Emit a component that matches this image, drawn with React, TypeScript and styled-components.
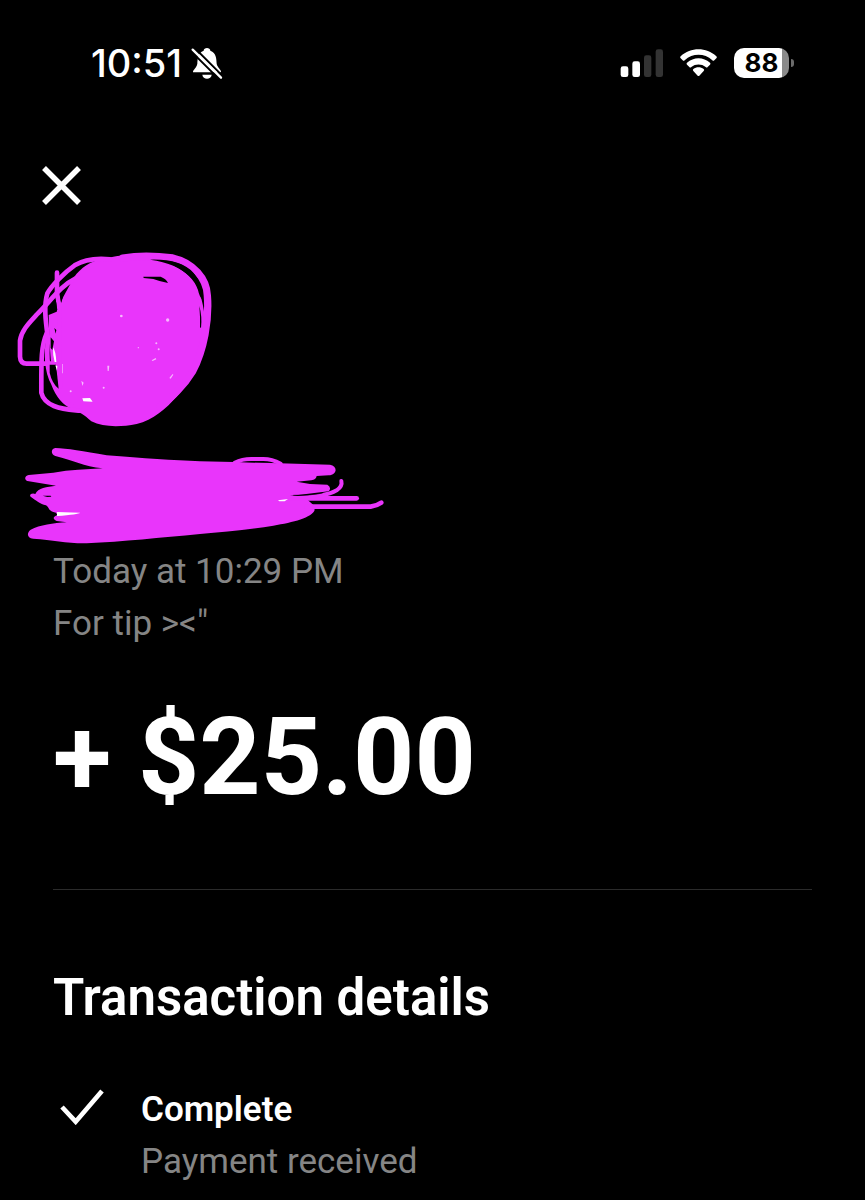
import React from "react";
import styled, { createGlobalStyle } from "styled-components";

const INK = "#e935fb";

const GlobalStyle = createGlobalStyle`
  *, *::before, *::after {
    box-sizing: border-box;
  }

  body {
    margin: 0;
    background: #000;
    color: #fff;
    font-family: Roboto, "Liberation Sans", sans-serif;
  }

  svg {
    display: block;
    flex-shrink: 0;
  }
`;

const Screen = styled.div`
  min-height: 100vh;
  background: #000;
`;

const StatusBar = styled.header`
  display: flex;
  align-items: center;
  justify-content: space-between;
  height: 126px;
  padding: 0 71px 0 91px;
  font-family: Inter, sans-serif;
`;

const StatusGroup = styled.div<{ $gap: number }>`
  display: flex;
  align-items: center;
  gap: ${({ $gap }) => $gap}px;
`;

const Clock = styled.time`
  font-size: 38px;
  line-height: 48px;
  font-weight: 500;
`;

const Battery = styled.div`
  display: flex;
  align-items: center;
  gap: 2px;
`;

const BatteryBody = styled.div<{ $level: number }>`
  display: flex;
  align-items: center;
  justify-content: center;
  width: 55px;
  height: 30px;
  border-radius: 10px;
  background: linear-gradient(
    to right,
    #fff ${({ $level }) => $level}%,
    #8a8a8a ${({ $level }) => $level}%
  );
  color: #000;
  font-size: 26px;
  line-height: 30px;
  font-weight: 700;
`;

const BatteryTip = styled.span`
  width: 3px;
  height: 8px;
  border-radius: 0 4px 4px 0;
  background: #6b6b6b;
`;

const TopNav = styled.nav`
  padding: 39px 41px 34px;
`;

const CloseButton = styled.button`
  display: block;
  padding: 0;
  border: 0;
  background: none;
  color: #fff;
  cursor: pointer;
`;

const Payer = styled.div`
  padding-left: 10px;
`;

const Content = styled.main`
  padding: 1px 53px 12px;
`;

const Muted = styled.p`
  margin: 0;
  color: #858585;
  font-size: 35px;
  line-height: 52px;
`;

const Amount = styled.h1`
  margin: 48px 0 71px;
  font-size: 107px;
  line-height: 120px;
  font-weight: 700;
`;

const Divider = styled.hr`
  height: 1px;
  margin: 0;
  border: 0;
  background: #2b2b2b;
`;

const SectionTitle = styled.h2`
  margin: 76px 0 54px;
  font-size: 51px;
  line-height: 64px;
  font-weight: 600;
`;

const Step = styled.div`
  display: flex;
  align-items: flex-start;
  gap: 36px;
`;

const StepIcon = styled.div`
  display: flex;
  align-items: center;
  justify-content: flex-end;
  width: 52px;
  height: 46px;
`;

const StepTitle = styled.h3`
  margin: 0;
  font-size: 35px;
  line-height: 52px;
  font-weight: 600;
`;

function SilentIcon() {
  return (
    <svg width="32" height="34" viewBox="0 0 96 102" role="img" aria-label="Silent mode">
      <path
        d="M6 79C5 71 17 66 19 53C20 38 20 20 38 14C38 3 58 3 58 14C76 20 76 39 77 53C79 65 91 70 90 79Z"
        fill="#fff"
      />
      <path d="M34 86H62C61 102 35 102 34 86Z" fill="#fff" />
      <path d="M8 3L98 93M-1 14L86 101" stroke="#000" strokeWidth="6" />
      <path d="M5 11L90 95" stroke="#fff" strokeWidth="7" strokeLinecap="round" />
    </svg>
  );
}

function SignalIcon() {
  return (
    <svg width="43" height="28" viewBox="0 0 129 84" role="img" aria-label="Signal">
      <rect x="2" y="52" width="23" height="32" rx="7" fill="#fff" />
      <rect x="37" y="37" width="23" height="47" rx="7" fill="#fff" />
      <rect x="72" y="19" width="22" height="65" rx="7" fill="#333" />
      <rect x="107" y="1" width="22" height="83" rx="7" fill="#333" />
    </svg>
  );
}

function WifiIcon() {
  return (
    <svg width="37" height="28" viewBox="0 0 111 84" role="img" aria-label="Wi-Fi">
      <path
        d="M2 22C32 -6 79 -6 109 22Q112 25 109 28L103 34Q100 37 97 34C73 12 38 12 14 34Q11 37 8 34L2 28Q-1 25 2 22Z"
        fill="#fff"
      />
      <path
        d="M21 41C41 23 70 23 90 41Q93 44 90 47L83 54Q80 57 77 54C65 44 46 44 34 54Q31 57 28 54L21 47Q18 44 21 41Z"
        fill="#fff"
      />
      <path d="M40 60C49 53 62 53 71 60Q74 63 71 66L58 80Q56 82 53 80L40 66Q37 63 40 60Z" fill="#fff" />
    </svg>
  );
}

function CloseIcon() {
  return (
    <svg width="41" height="41" viewBox="0 0 41 41" aria-hidden="true">
      <path d="M3 3L38 38M38 3L3 38" stroke="currentColor" strokeWidth="5.5" />
    </svg>
  );
}

function CheckIcon() {
  return (
    <svg width="45" height="36" viewBox="0 0 135 108" aria-hidden="true">
      <path d="M6 54L47 98L126 6" fill="none" stroke="#fff" strokeWidth="14" />
    </svg>
  );
}

// Marker scribble that hides the payer's avatar
function AvatarScribble() {
  return (
    <svg width="220" height="200" viewBox="0 0 660 600" role="img" aria-label="Hidden avatar">
      <path
        d="M192 112C212 84 242 62 280 58C320 46 340 44 400 50C462 56 520 86 548 118C566 140 578 180 584 230L588 310C576 370 540 424 500 470C468 505 430 540 380 552C330 562 280 562 244 544C222 524 205 514 186 508C160 490 140 460 126 410L118 300L116 225L140 215L160 170Z"
        fill={INK}
      />
      <g fill="none" stroke={INK} strokeLinecap="round" strokeLinejoin="round">
        <path
          d="M338 54C390 46 440 48 488 54C550 68 590 116 592 166C598 240 582 330 548 394C520 440 486 470 450 500"
          strokeWidth="22"
        />
        <path
          d="M300 58C260 54 220 60 194 76C162 98 124 138 112 160C100 200 108 250 114 296C110 340 108 390 130 430C142 462 160 488 188 500"
          strokeWidth="14"
        />
        <path
          d="M196 116C150 138 120 186 80 224C56 250 34 272 30 302V350Q31 371 50 371H138"
          strokeWidth="14"
        />
        <path d="M110 280C92 320 94 370 94 458Q100 484 132 498C160 510 190 510 210 512" strokeWidth="14" />
        <path d="M141 98V160C150 200 152 240 146 300L150 440" strokeWidth="14" />
      </g>
      <g fill="#000">
        <path d="M168 150C160 162 157 174 154 190L151 172Z" />
        <path d="M118 198L137 178L142 210L115 220Z" />
        <path d="M119 398L119 374H138L146 446Q126 430 119 398Z" />
        <path d="M103 396Q112 458 155 492Q122 486 105 460Z" />
        <path d="M400 110H452Q468 116 474 129Q448 124 430 117L401 114Z" />
        <path d="M420 59Q510 56 550 98Q578 130 578 180Q568 170 564 150Q548 104 492 78Q460 64 420 59Z" />
        <path d="M568 198Q577 230 573 264L570 262Q571 230 568 198Z" />
        <path d="M122 292L132 304L127 330L122 324ZM133 264L139 270L137 281Z" />
      </g>
      <g fill="#fff">
        <path d="M129 322Q137 332 139 366H134Q128 346 129 322ZM136 376L142 378L141 392Z" />
        <path d="M217 475L240 474L248 485L220 484Z" />
      </g>
      <g fill="#fff" opacity="0.65">
        <circle cx="334" cy="228" r="4" />
        <circle cx="473" cy="240" r="5" />
        <path d="M425 361L437 354L439 358L428 363ZM478 414L488 402L490 404L482 416Z" />
        <path d="M292 377H298L296 393H293ZM214 422L221 428L217 438ZM157 372L159 372V400H157Z" />
        <circle cx="281" cy="443" r="3" />
        <circle cx="446" cy="328" r="3" />
        <circle cx="439" cy="310" r="3" />
        <circle cx="385" cy="323" r="2" />
        <circle cx="182" cy="454" r="3" />
      </g>
    </svg>
  );
}

// Marker scribble that hides the payer's name
function NameScribble() {
  return (
    <svg width="390" height="105" viewBox="0 15 1170 315" role="img" aria-label="Hidden name">
      <path
        d="M136 39C170 40 220 48 290 61C400 70 490 76 570 79L670 81L960 89C984 94 982 119 956 121L920 123Q918 134 904 136L860 140L900 147L952 149Q966 158 956 169L840 183H880L910 210L914 225C906 248 850 262 790 272C720 284 640 292 570 297C450 308 340 320 230 325C170 326 130 314 70 311C50 310 50 292 62 284C90 270 130 264 170 262L140 258C126 252 130 244 142 240L138 233C112 228 118 216 108 211C90 208 78 196 64 187C54 180 66 172 76 177C84 158 110 156 138 152L52 138C42 134 44 122 56 120L130 113C180 104 230 103 278 100C220 94 190 76 136 63C122 58 122 41 136 39Z"
        fill={INK}
      />
      <g fill="none" stroke={INK} strokeLinecap="round" strokeLinejoin="round">
        <path d="M674 83Q696 72 724 72H760Q786 72 812 86" strokeWidth="12" />
        <path d="M994 138Q998 154 980 166C956 180 900 188 850 190" strokeWidth="12" />
        <path d="M840 190H1040" strokeWidth="14" />
        <path d="M890 215H1082Q1100 213 1114 203" strokeWidth="14" />
      </g>
      <path d="M98 182H122L124 185L112 186Z" fill="#000" />
      <path d="M694 81Q730 77 774 82Z" fill="#000" />
      <path d="M850 181Q906 181 938 174" fill="none" stroke="#000" strokeWidth="2" />
      <path d="M141 231L210 233Q206 238 141 243Z" fill="#fff" />
      <path d="M804 196L834 192L824 199H808Z" fill="#fff" />
    </svg>
  );
}

export default function App() {
  return (
    <>
      <GlobalStyle />
      <Screen>
        <StatusBar>
          <StatusGroup $gap={9}>
            <Clock>10:51</Clock>
            <SilentIcon />
          </StatusGroup>
          <StatusGroup $gap={17}>
            <SignalIcon />
            <WifiIcon />
            <Battery>
              <BatteryBody $level={88}>88</BatteryBody>
              <BatteryTip />
            </Battery>
          </StatusGroup>
        </StatusBar>

        <TopNav>
          <CloseButton type="button" aria-label="Close">
            <CloseIcon />
          </CloseButton>
        </TopNav>

        <Payer>
          <AvatarScribble />
          <NameScribble />
        </Payer>

        <Content>
          <Muted>Today at 10:29 PM</Muted>
          <Muted>For tip &gt;&lt;"</Muted>
          <Amount>+ $25.00</Amount>
          <Divider />
          <SectionTitle>Transaction details</SectionTitle>
          <Step>
            <StepIcon>
              <CheckIcon />
            </StepIcon>
            <div>
              <StepTitle>Complete</StepTitle>
              <Muted>Payment received</Muted>
            </div>
          </Step>
        </Content>
      </Screen>
    </>
  );
}
